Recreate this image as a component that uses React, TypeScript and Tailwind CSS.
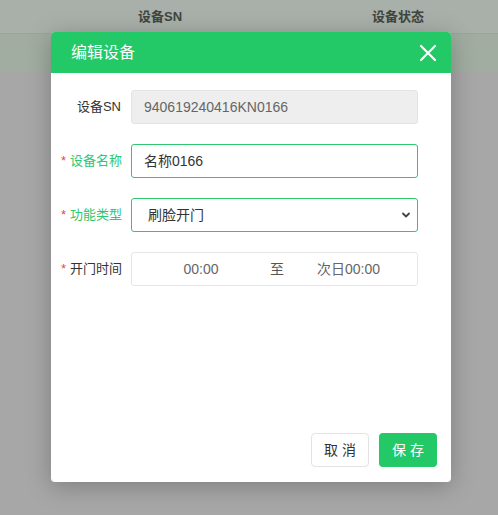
import React from "react";

export default function App() {
  const font = { fontFamily: '"Liberation Sans","Noto Sans CJK SC",sans-serif' };
  return (
    <div className="relative w-[498px] h-[515px] overflow-hidden bg-[#a7a7a7]" style={font}>
      {/* background table header */}
      <div className="h-[34px] bg-[#a9b0a9] border-b border-[#9aa69a] flex items-center text-[13px] font-bold text-[#3f4540]">
        <div className="w-[138px]" />
        <div className="w-[234px]">设备SN</div>
        <div>设备状态</div>
      </div>
      <div className="h-[38px] bg-[#a0ada0]" />

      {/* modal */}
      <div className="absolute left-[51px] top-[32px] w-[400px] h-[450px] bg-white rounded-[4px] shadow-[0_4px_24px_rgba(0,0,0,0.25)] flex flex-col overflow-hidden">
        <div className="h-[41px] bg-[#23c966] flex items-center justify-between pl-[20px] pr-[14px]">
          <span className="text-white text-[16px]">编辑设备</span>
          <svg width="18" height="18" viewBox="0 0 18 18" fill="none" stroke="white" strokeWidth="2.2" strokeLinecap="round">
            <path d="M2 2 L16 16 M16 2 L2 16" />
          </svg>
        </div>
        <div className="flex flex-col gap-[20px] pt-[17px] pl-[10px] pr-[33px]">
          <div className="flex items-center">
            <div className="w-[60px] text-right text-[13px] text-[#333]">设备SN</div>
            <div className="ml-[10px] flex-1 h-[34px] rounded-[3px] bg-[#eeeeee] border border-[#e3e3e3] flex items-center pl-[12px] text-[14px] text-[#666]">
              940619240416KN0166
            </div>
          </div>
          <div className="flex items-center">
            <div className="w-[60px] text-right text-[13px] text-[#2fc76f] whitespace-nowrap">
              <span className="text-[#e5484d] mr-[4px]">*</span>设备名称
            </div>
            <div className="ml-[10px] flex-1 h-[34px] rounded-[3px] border border-[#2fc76f] flex items-center pl-[12px] text-[14px] text-[#333]">
              名称0166
            </div>
          </div>
          <div className="flex items-center">
            <div className="w-[60px] text-right text-[13px] text-[#2fc76f] whitespace-nowrap">
              <span className="text-[#e5484d] mr-[4px]">*</span>功能类型
            </div>
            <div className="ml-[10px] flex-1 h-[34px] rounded-[3px] border border-[#2fc76f] flex items-center justify-between pl-[16px] pr-[6px] text-[14px] text-[#333]">
              <span>刷脸开门</span>
              <svg width="10" height="10" viewBox="0 0 10 10" fill="none" stroke="#444" strokeWidth="1.8" strokeLinecap="round" strokeLinejoin="round">
                <path d="M2 3.5 L5 6.5 L8 3.5" />
              </svg>
            </div>
          </div>
          <div className="flex items-center">
            <div className="w-[60px] text-right text-[13px] text-[#333] whitespace-nowrap">
              <span className="text-[#e5484d] mr-[4px]">*</span>开门时间
            </div>
            <div className="ml-[10px] flex-1 h-[34px] rounded-[3px] border border-[#e6e6e6] flex items-center text-[14px] text-[#666]">
              <span className="w-[138px] text-center">00:00</span>
              <span className="w-[10px] text-center text-[#555]">至</span>
              <span className="flex-1 text-center">次日00:00</span>
            </div>
          </div>
        </div>
        <div className="mt-auto flex justify-end gap-[10px] pr-[14px] pb-[15px]">
          <button className="w-[58px] h-[34px] rounded-[4px] border border-[#e3e3e3] bg-white text-[14px] text-[#333] tracking-[4px] pl-[4px]">取消</button>
          <button className="w-[58px] h-[34px] rounded-[4px] bg-[#23c966] text-[14px] text-white tracking-[4px] pl-[4px]">保存</button>
        </div>
      </div>
    </div>
  );
}
